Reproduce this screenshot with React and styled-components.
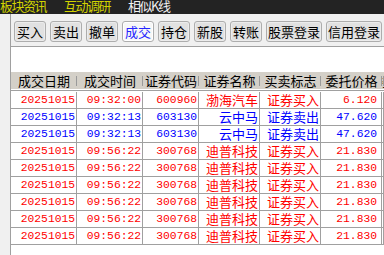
import styled, { createGlobalStyle } from 'styled-components';

const GlobalStyle = createGlobalStyle`
  html, body {
    margin: 0;
    padding: 0;
    background: #f0f0f0;
    overflow: hidden;
  }
  #root {
    width: 384px;
    height: 255px;
  }
`;

const CJK = '"Noto Sans CJK SC", "Noto Sans", sans-serif';
const MONO = '"Liberation Mono", "Noto Sans CJK SC", monospace';

const columns = [
  { title: '成交日期', width: 66, key: 'date', mono: true },
  { title: '成交时间', width: 66, key: 'time', mono: true },
  { title: '证券代码', width: 56, key: 'code', mono: true },
  { title: '证券名称', width: 61, key: 'name' },
  { title: '买卖标志', width: 61, key: 'flag' },
  { title: '委托价格', width: 61, key: 'price', mono: true, pad: 4 },
  { title: '委托数量', width: 0, key: 'qty' },
];

const buy = (code, name, price, time) => ({
  date: '20251015', time, code, name, flag: '证券买入', price, side: 'buy',
});
const sell = (code, name, price, time) => ({
  date: '20251015', time, code, name, flag: '证券卖出', price, side: 'sell',
});

const rows = [
  buy('600960', '渤海汽车', '6.120', '09:32:00'),
  sell('603130', '云中马', '47.620', '09:32:13'),
  sell('603130', '云中马', '47.620', '09:32:13'),
  buy('300768', '迪普科技', '21.830', '09:56:22'),
  buy('300768', '迪普科技', '21.830', '09:56:22'),
  buy('300768', '迪普科技', '21.830', '09:56:22'),
  buy('300768', '迪普科技', '21.830', '09:56:22'),
  buy('300768', '迪普科技', '21.830', '09:56:22'),
  buy('300768', '迪普科技', '21.830', '09:56:22'),
];

const buttons = [
  { label: '买入' },
  { label: '卖出' },
  { label: '撤单' },
  { label: '成交', active: true },
  { label: '持仓' },
  { label: '新股' },
  { label: '转账' },
  { label: '股票登录', wide: true },
  { label: '信用登录', wide: true },
];

const gridTemplate = columns.map((c) => (c.width ? `${c.width}px` : '1fr')).join(' ');

function App() {
  return (
    <>
      <GlobalStyle />
      <Page>
        <TopBar>
          <TopLink>板块资讯</TopLink>
          <TopLink>互动调研</TopLink>
          <TopLink $white>相似K线</TopLink>
        </TopBar>
        <Body>
          <LeftStrip />
          <Main>
            <Toolbar>
              {buttons.map((b) => (
                <ToolButton key={b.label} $active={b.active} $wide={b.wide}>
                  {b.label}
                </ToolButton>
              ))}
            </Toolbar>
            <Spacer />
            <Table>
              <HeaderRow>
                {columns.map((c) => (
                  <HeaderCell key={c.key}>{c.title}</HeaderCell>
                ))}
              </HeaderRow>
              {rows.map((r, i) => (
                <Row key={i} $side={r.side}>
                  {columns.map((c) => (
                    <Cell key={c.key} $mono={c.mono} $pad={c.pad}>
                      {r[c.key] || ''}
                    </Cell>
                  ))}
                </Row>
              ))}
            </Table>
          </Main>
        </Body>
      </Page>
    </>
  );
}

const Page = styled.div`
  width: 384px;
  height: 255px;
  display: flex;
  flex-direction: column;
  overflow: hidden;
`;

const TopBar = styled.div`
  height: 14px;
  flex: none;
  background: #232323;
  display: flex;
  align-items: center;
  gap: 18px;
  padding-left: 0;
  overflow: hidden;
`;

const TopLink = styled.span`
  font-family: ${CJK};
  font-size: 13px;
  letter-spacing: -1.5px;
  line-height: 14px;
  margin-top: -3px;
  color: ${(p) => (p.$white ? '#f0f0f0' : '#d2d200')};
  white-space: nowrap;
`;

const Body = styled.div`
  flex: 1;
  display: flex;
  min-height: 0;
`;

const LeftStrip = styled.div`
  width: 10px;
  flex: none;
  background: #f0f0f0;
  border-right: 1px solid #a0a0a0;
`;

const Main = styled.div`
  flex: 1;
  display: flex;
  flex-direction: column;
  background: #ffffff;
  min-width: 0;
`;

const Toolbar = styled.div`
  height: 33px;
  flex: none;
  box-sizing: border-box;
  background: #f0f0f0;
  border-bottom: 1px solid #a0a0a0;
  display: flex;
  align-items: flex-start;
  gap: 4px;
  padding: 7px 0 0 3px;
`;

const ToolButton = styled.div`
  flex: none;
  box-sizing: border-box;
  width: ${(p) => (p.$wide ? 56 : 32)}px;
  height: 21px;
  border: 1px solid #adadad;
  border-radius: 3px;
  background: ${(p) => (p.$active ? '#f7f7f7' : '#e1e1e1')};
  box-shadow: inset 0 0 0 1px ${(p) => (p.$active ? '#ffffff' : '#ececec')};
  color: ${(p) => (p.$active ? '#2424ff' : '#000000')};
  font-family: ${CJK};
  font-size: 13px;
  line-height: 19px;
  text-align: center;
  white-space: nowrap;
`;

const Spacer = styled.div`
  height: 25px;
  flex: none;
`;

const Table = styled.div`
  display: flex;
  flex-direction: column;
`;

const HeaderRow = styled.div`
  display: grid;
  grid-template-columns: ${gridTemplate};
  height: 17px;
  background: #d4d0c8;
  border-bottom: 1px solid #ffffff;
  box-shadow: 0 1px 0 #a0a0a0;
  margin-bottom: 2px;
`;

const HeaderCell = styled.div`
  position: relative;
  font-family: ${CJK};
  font-size: 13px;
  line-height: 17px;
  color: #000;
  text-align: center;
  white-space: nowrap;
  overflow: hidden;

  &::after {
    content: '';
    position: absolute;
    right: 0;
    top: 4px;
    height: 10px;
    width: 1px;
    background: #9a9a9a;
    box-shadow: 1px 0 0 #ffffff;
  }
`;

const Row = styled.div`
  display: grid;
  grid-template-columns: ${gridTemplate};
  height: 17px;
  box-sizing: border-box;
  border-bottom: 1px solid #a0a0a0;
  color: ${(p) => (p.$side === 'sell' ? '#0000ff' : '#ff0000')};
`;

const Cell = styled.div`
  box-sizing: border-box;
  border-right: 1px solid #a0a0a0;
  padding-right: ${(p) => p.$pad || 1}px;
  text-align: right;
  white-space: nowrap;
  overflow: hidden;
  font-family: ${(p) => (p.$mono ? MONO : CJK)};
  font-size: ${(p) => (p.$mono ? '11.3px' : '13px')};
  line-height: 16px;
`;

export default App;
